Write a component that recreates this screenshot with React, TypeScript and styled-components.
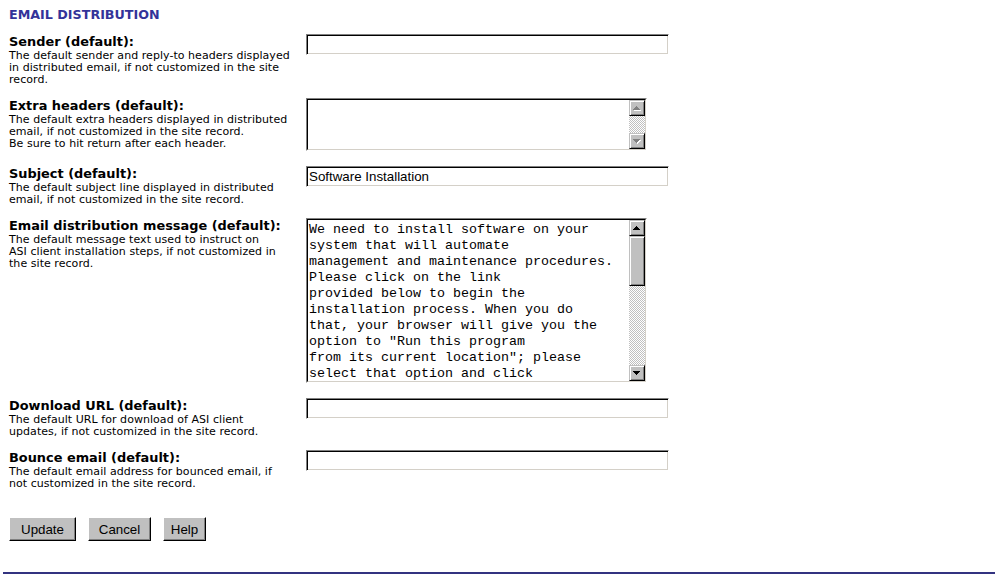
import React from "react";
import styled, { createGlobalStyle, css } from "styled-components";

const GlobalStyle = createGlobalStyle`
  html, body {
    margin: 0;
    padding: 0;
    background: #fff;
  }
  body {
    font-family: "DejaVu Sans", Verdana, sans-serif;
    color: #000;
  }
`;

const Page = styled.div`
  width: 1000px;
  padding-top: 7px;
`;

const Content = styled.div`
  padding-left: 9px;
`;

const Title = styled.h1`
  margin: 0 0 12px;
  font-size: 12.7px;
  line-height: 15px;
  font-weight: bold;
  color: #333399;
`;

const Field = styled.div`
  display: grid;
  grid-template-columns: 297px auto;
  align-items: start;
  margin-bottom: 12px;
`;

const LabelCell = styled.div`
  white-space: nowrap;
`;

const Label = styled.div`
  font-size: 12.9px;
  line-height: 16px;
  font-weight: bold;
`;

const Hint = styled.div`
  font-size: 11px;
  line-height: 12px;
  letter-spacing: 0.05px;
`;

const TextBox = styled.input`
  display: block;
  width: 363px;
  height: 21px;
  box-sizing: border-box;
  margin: 0;
  padding: 0 2px;
  border: 1px solid;
  border-color: #808080 #fff #fff #808080;
  box-shadow: inset 1px 1px #000, inset -1px -1px #d4d0c8;
  background: #fff;
  font-family: "Liberation Sans", Arial, sans-serif;
  font-size: 13.33px;
  color: #000;
  outline: none;
`;

const AreaOuter = styled.div<{ $h: number }>`
  width: 341px;
  height: ${(p) => p.$h}px;
  box-sizing: border-box;
  margin-bottom: 3px;
  border: 1px solid;
  border-color: #808080 #fff #fff #808080;
`;

const AreaInner = styled.div`
  display: flex;
  height: 100%;
  box-sizing: border-box;
  border: 1px solid;
  border-color: #000 #d4d0c8 #d4d0c8 #000;
  background: #fff;
`;

const AreaText = styled.textarea`
  flex: 1;
  min-width: 0;
  margin: 0;
  padding: 2px 1px 0;
  border: none;
  resize: none;
  overflow: hidden;
  outline: none;
  background: #fff;
  font-family: "Liberation Mono", "Courier New", monospace;
  font-size: 13.33px;
  line-height: 16px;
  color: #000;
`;

const ScrollBar = styled.div`
  flex: none;
  width: 16px;
  display: flex;
  flex-direction: column;
`;

const raised = css`
  box-sizing: border-box;
  background: #c0c0c0;
  border: 1px solid;
  border-color: #c0c0c0 #000 #000 #c0c0c0;
  box-shadow: inset 1px 1px #fff, inset -1px -1px #808080;
`;

const ScrollButton = styled.div`
  ${raised};
  flex: none;
  height: 16px;
  display: flex;
  align-items: center;
  justify-content: center;
`;

const Thumb = styled.div<{ $h: number }>`
  ${raised};
  flex: none;
  height: ${(p) => p.$h}px;
`;

const Track = styled.div`
  flex: 1;
  background: repeating-conic-gradient(#c0c0c0 0 25%, #fff 0 50%) 0 0 / 2px 2px;
`;

const ButtonBar = styled.div`
  display: flex;
  gap: 12px;
  padding-top: 15px;
`;

const Button = styled.button<{ $w: number }>`
  width: ${(p) => p.$w}px;
  height: 24px;
  box-sizing: border-box;
  margin: 0;
  padding: 0;
  background: #c0c0c0;
  border: 1px solid;
  border-color: #fff #000 #000 #fff;
  box-shadow: inset -1px -1px #808080;
  font-family: "Liberation Sans", Arial, sans-serif;
  font-size: 13.33px;
  color: #000;
`;

const Rule = styled.hr`
  height: 2px;
  margin: 31px 5px 0 3px;
  border: none;
  background: #333380;
`;

const Arrow: React.FC<{ up?: boolean; disabled?: boolean }> = ({ up, disabled }) => {
  const rows = [0, 1, 2, 3].map((i) => {
    const y = up ? i : 3 - i;
    return { x: 3 - i, y, w: 2 * i + 1 };
  });
  return (
    <svg width="8" height="5" viewBox="0 0 8 5" shapeRendering="crispEdges">
      {disabled &&
        rows.map((r, i) => (
          <rect key={"s" + i} x={r.x + 1} y={r.y + 1} width={r.w} height={1} fill="#fff" />
        ))}
      {rows.map((r, i) => (
        <rect key={i} x={r.x} y={r.y} width={r.w} height={1} fill={disabled ? "#808080" : "#000"} />
      ))}
    </svg>
  );
};

interface AreaProps {
  height: number;
  value: string;
  thumb?: number;
}

const TextArea: React.FC<AreaProps> = ({ height, value, thumb }) => {
  const disabled = !thumb;
  return (
    <AreaOuter $h={height}>
      <AreaInner>
        <AreaText defaultValue={value} spellCheck={false} />
        <ScrollBar>
          <ScrollButton>
            <Arrow up disabled={disabled} />
          </ScrollButton>
          {thumb ? <Thumb $h={thumb} /> : null}
          <Track />
          <ScrollButton>
            <Arrow disabled={disabled} />
          </ScrollButton>
        </ScrollBar>
      </AreaInner>
    </AreaOuter>
  );
};

interface FieldRowProps {
  label: string;
  hint: string[];
  children: React.ReactNode;
}

const FieldRow: React.FC<FieldRowProps> = ({ label, hint, children }) => {
  return (
    <Field>
      <LabelCell>
        <Label>{label}</Label>
        {hint.map((line, i) => (
          <Hint key={i}>{line}</Hint>
        ))}
      </LabelCell>
      <div>{children}</div>
    </Field>
  );
};

const message = [
  "We need to install software on your",
  "system that will automate",
  "management and maintenance procedures.",
  "Please click on the link",
  "provided below to begin the",
  "installation process. When you do",
  "that, your browser will give you the",
  'option to "Run this program',
  'from its current location"; please',
  "select that option and click",
  '"OK".',
].join("\n");

const App: React.FC = () => {
  return (
    <Page>
      <GlobalStyle />
      <Content>
        <Title>EMAIL DISTRIBUTION</Title>
        <FieldRow
          label="Sender (default):"
          hint={[
            "The default sender and reply-to headers displayed",
            "in distributed email, if not customized in the site",
            "record.",
          ]}
        >
          <TextBox defaultValue="" />
        </FieldRow>
        <FieldRow
          label="Extra headers (default):"
          hint={[
            "The default extra headers displayed in distributed",
            "email, if not customized in the site record.",
            "Be sure to hit return after each header.",
          ]}
        >
          <TextArea height={53} value="" />
        </FieldRow>
        <FieldRow
          label="Subject (default):"
          hint={[
            "The default subject line displayed in distributed",
            "email, if not customized in the site record.",
          ]}
        >
          <TextBox defaultValue="Software Installation" />
        </FieldRow>
        <FieldRow
          label="Email distribution message (default):"
          hint={[
            "The default message text used to instruct on",
            "ASI client installation steps, if not customized in",
            "the site record.",
          ]}
        >
          <TextArea height={165} value={message} thumb={50} />
        </FieldRow>
        <FieldRow
          label="Download URL (default):"
          hint={[
            "The default URL for download of ASI client",
            "updates, if not customized in the site record.",
          ]}
        >
          <TextBox defaultValue="" />
        </FieldRow>
        <FieldRow
          label="Bounce email (default):"
          hint={[
            "The default email address for bounced email, if",
            "not customized in the site record.",
          ]}
        >
          <TextBox defaultValue="" />
        </FieldRow>
        <ButtonBar>
          <Button $w={67}>Update</Button>
          <Button $w={63}>Cancel</Button>
          <Button $w={43}>Help</Button>
        </ButtonBar>
      </Content>
      <Rule />
    </Page>
  );
};

export default App;
